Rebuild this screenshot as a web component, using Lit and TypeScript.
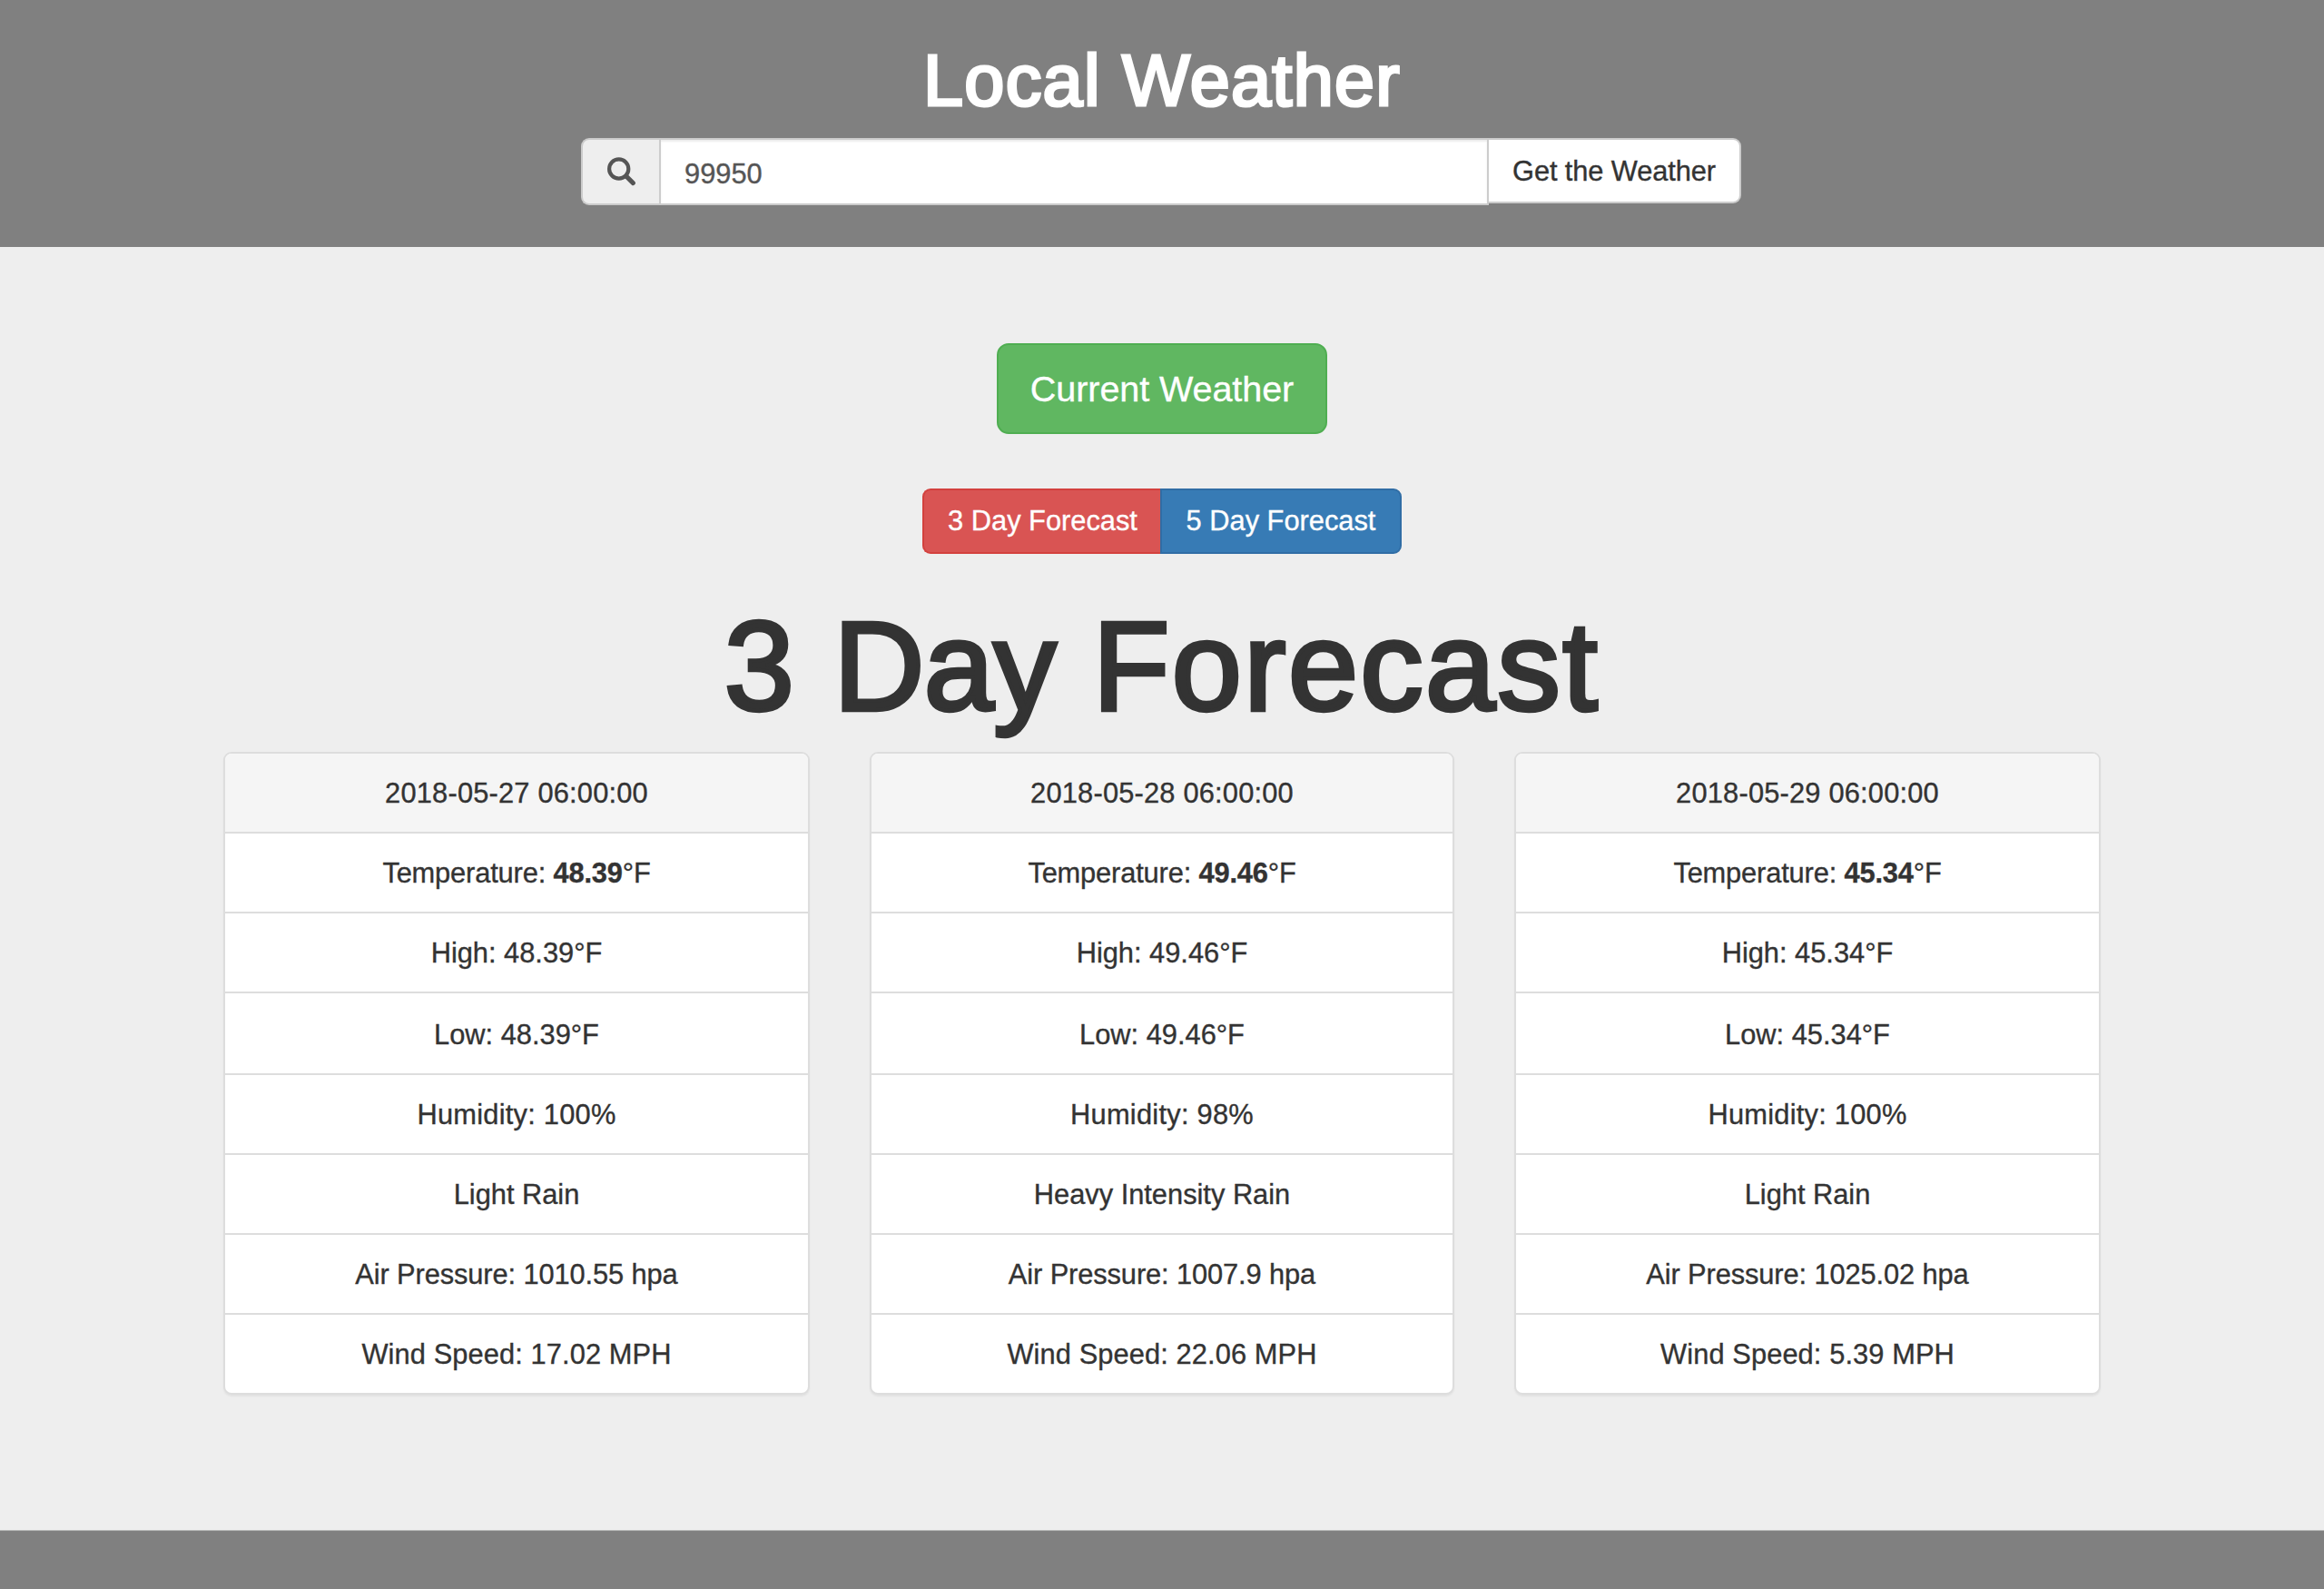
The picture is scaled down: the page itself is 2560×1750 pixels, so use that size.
import { LitElement, html, css, svg } from "lit";
import { customElement, property, state } from "lit/decorators.js";

interface Forecast {
  date: string;
  temp: string;
  humidity: string;
  sky: string;
  pressure: string;
  wind: string;
}

const FORECASTS: Forecast[] = [
  { date: "2018-05-27 06:00:00", temp: "48.39", humidity: "100", sky: "Light Rain", pressure: "1010.55", wind: "17.02" },
  { date: "2018-05-28 06:00:00", temp: "49.46", humidity: "98", sky: "Heavy Intensity Rain", pressure: "1007.9", wind: "22.06" },
  { date: "2018-05-29 06:00:00", temp: "45.34", humidity: "100", sky: "Light Rain", pressure: "1025.02", wind: "5.39" },
];

const searchIcon = svg`
  <circle cx="12.7" cy="13" r="10.6" fill="none" stroke="currentColor" stroke-width="4.2"></circle>
  <path d="M20.6 20.9 L28.4 28.6" fill="none" stroke="currentColor" stroke-width="5" stroke-linecap="round"></path>`;

@customElement("forecast-card")
class ForecastCard extends LitElement {
  @property({ attribute: false }) forecast!: Forecast;

  static styles = css`
    :host {
      display: block;
    }
    .card {
      box-sizing: border-box;
      border: 2px solid #ddd;
      border-radius: 9px;
      background: #fff;
      box-shadow: 0 2px 2px rgba(0, 0, 0, 0.05);
      overflow: hidden;
      text-align: center;
      line-height: 42px;
    }
    .heading {
      padding: 23px 0 21px;
      background: #f5f5f5;
      letter-spacing: 0.2px;
    }
    .row {
      padding: 23px 0 21px;
      border-top: 2px solid #ddd;
    }
    .temp {
      letter-spacing: -0.15px;
    }
    .low {
      padding-top: 25px;
    }
    .humidity {
      letter-spacing: 0.25px;
    }
    .air {
      letter-spacing: -0.1px;
    }
    .wind {
      letter-spacing: 0.1px;
    }
  `;

  render() {
    const f = this.forecast;
    return html`
      <div class="card">
        <div class="heading">${f.date}</div>
        <div class="row temp">Temperature: <b>${f.temp}</b>°F</div>
        <div class="row">High: ${f.temp}°F</div>
        <div class="row low">Low: ${f.temp}°F</div>
        <div class="row humidity">Humidity: ${f.humidity}%</div>
        <div class="row">${f.sky}</div>
        <div class="row air">Air Pressure: ${f.pressure} hpa</div>
        <div class="row wind">Wind Speed: ${f.wind} MPH</div>
      </div>
    `;
  }
}

@customElement("app-root")
class AppRoot extends LitElement {
  @state() private zip = "99950";

  static styles = css`
    :host {
      display: flex;
      flex-direction: column;
      height: 1750px;
      overflow: hidden;
      background: #eee;
      color: #333;
      font-family: "Liberation Sans", Arial, sans-serif;
      font-size: 30.8px;
      -webkit-text-stroke: 0.35px currentColor;
    }
    * {
      box-sizing: border-box;
    }
    h1,
    h2 {
      margin: 0;
      font-weight: 400;
      text-align: center;
      white-space: nowrap;
    }
    button,
    input {
      margin: 0;
      font: inherit;
      color: inherit;
      -webkit-text-stroke: 0.35px currentColor;
    }
    .header {
      height: 272px;
      flex: none;
      background: #808080;
      display: flex;
      flex-direction: column;
      align-items: center;
      padding-top: 45px;
    }
    .title {
      height: 107px;
      line-height: 88px;
      font-size: 79.2px;
      letter-spacing: 1.3px;
      color: #fff;
      -webkit-text-stroke: 3.2px #fff;
    }
    .search {
      display: flex;
      align-items: flex-start;
      width: 1278px;
      margin-right: 2px;
    }
    .addon {
      width: 86px;
      height: 74px;
      flex: none;
      display: flex;
      align-items: flex-start;
      padding: 19px 0 0 27px;
      border: 2px solid #ccc;
      border-right: 0;
      border-radius: 9px 0 0 9px;
      background: #eee;
      color: #555;
    }
    .addon svg {
      width: 32px;
      height: 32px;
      display: block;
    }
    .zip {
      flex: 1;
      min-width: 0;
      height: 74px;
      padding: 5px 26px 0;
      border: 2px solid #ccc;
      border-radius: 0;
      background: #fff;
      color: #555;
      box-shadow: inset 0 2px 2px rgba(0, 0, 0, 0.075);
      outline: none;
    }
    .go {
      width: 278px;
      height: 72px;
      padding: 2px 0 0;
      border: 2px solid #ccc;
      border-left: 0;
      border-radius: 0 9px 9px 0;
      background: #fff;
      white-space: nowrap;
      letter-spacing: -0.1px;
    }
    .main {
      flex: 1;
      display: flex;
      flex-direction: column;
      align-items: center;
      padding-top: 106px;
    }
    .current {
      width: 364px;
      height: 100px;
      padding: 0;
      border: 2px solid #4fae51;
      border-radius: 13px;
      background: #60b761;
      color: #fff;
      font-size: 39.6px;
      letter-spacing: -0.1px;
    }
    .range {
      display: flex;
      margin-top: 60px;
      color: #fff;
    }
    .range button {
      height: 72px;
      padding: 0;
      border: 2px solid;
    }
    .range .three {
      width: 262px;
      padding-left: 1px;
      border-color: #d3413e;
      border-right: 0;
      border-radius: 9px 0 0 9px;
      background: #d95453;
    }
    .range .five {
      width: 266px;
      border-color: #306da5;
      border-radius: 0 9px 9px 0;
      background: #377bb5;
    }
    .heading {
      height: 218px;
      padding-top: 48px;
      line-height: 152px;
      font-size: 138.6px;
      letter-spacing: 2.4px;
      -webkit-text-stroke: 4.4px #333;
    }
    .heading .day {
      letter-spacing: -0.6px;
    }
    .cards {
      display: grid;
      grid-template-columns: 646px 644px 646px;
      gap: 66px;
    }
    .footer {
      height: 65px;
      flex: none;
      background: #808080;
      border-top: 1px solid #b5b7b5;
    }
  `;

  private onInput(e: Event) {
    this.zip = (e.target as HTMLInputElement).value;
  }

  render() {
    return html`
      <header class="header">
        <h1 class="title">Local Weather</h1>
        <div class="search">
          <span class="addon"><svg viewBox="0 0 32 32">${searchIcon}</svg></span>
          <input class="zip" type="text" .value=${this.zip} @input=${this.onInput} />
          <button class="go">Get the Weather</button>
        </div>
      </header>
      <main class="main">
        <button class="current">Current Weather</button>
        <div class="range">
          <button class="three">3 Day Forecast</button>
          <button class="five">5 Day Forecast</button>
        </div>
        <h2 class="heading">3 <span class="day">Day</span> Forecast</h2>
        <div class="cards">
          ${FORECASTS.map((f) => html`<forecast-card .forecast=${f}></forecast-card>`)}
        </div>
      </main>
      <footer class="footer"></footer>
    `;
  }
}
